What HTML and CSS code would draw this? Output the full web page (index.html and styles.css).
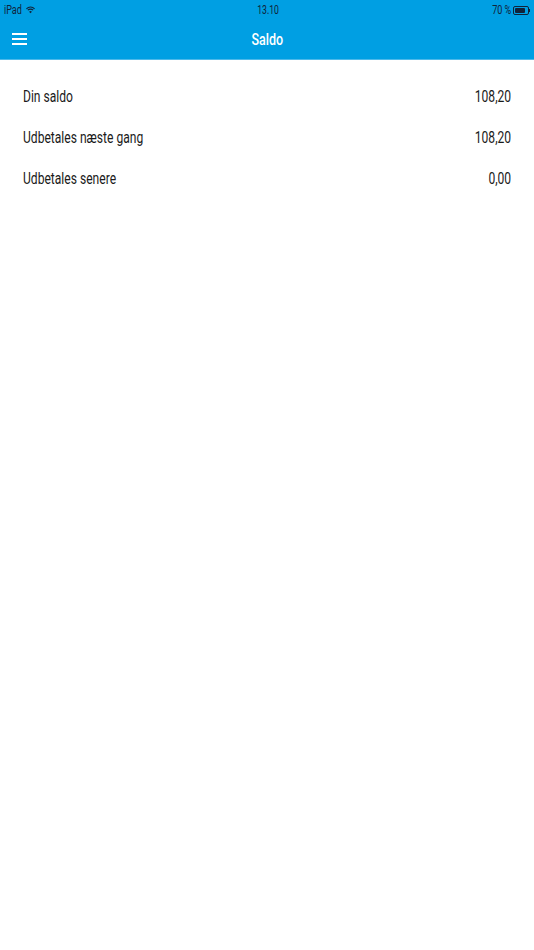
FILE: index.html
```html
<!DOCTYPE html>
<html lang="da">
<head>
    <meta charset="UTF-8">
    <title>Saldo</title>
    <link rel="stylesheet" href="styles.css">
</head>
<body>
    <header class="header">
        <div class="status-bar">
            <div class="status-left">
                <span class="narrow-left">iPad</span>
                <svg class="wifi" width="9" height="8" viewBox="0 0 11 9">
                    <path d="M0.5 3 A7 7 0 0 1 10.5 3" fill="none" stroke="#10233a" stroke-width="1.3"/>
                    <path d="M2.2 4.8 A4.6 4.6 0 0 1 8.8 4.8" fill="none" stroke="#10233a" stroke-width="1.3"/>
                    <path d="M3.8 6.5 A2.4 2.4 0 0 1 7.2 6.5 L5.5 8.6 Z" fill="#10233a"/>
                </svg>
            </div>
            <div class="status-time">13.10</div>
            <div class="status-right">
                <span class="narrow-right">70 %</span>
                <div class="battery"><div class="battery-level"></div></div>
                <div class="battery-tip"></div>
            </div>
        </div>
        <div class="nav-bar">
            <div class="menu-icon">
                <span></span>
                <span></span>
                <span></span>
            </div>
            <div class="nav-title">Saldo</div>
        </div>
    </header>

    <main class="balance-list">
        <div class="balance-row">
            <span class="narrow-left">Din saldo</span>
            <span class="narrow-right">108,20</span>
        </div>
        <div class="balance-row">
            <span class="narrow-left">Udbetales næste gang</span>
            <span class="narrow-right">108,20</span>
        </div>
        <div class="balance-row">
            <span class="narrow-left">Udbetales senere</span>
            <span class="narrow-right">0,00</span>
        </div>
    </main>
</body>
</html>
```

FILE: styles.css
```css
body {
    margin: 0;
    background-color: #fff;
    font-family: Roboto, "Liberation Sans", sans-serif;
}
/* the screenshot is squeezed sideways, so the text is too */
.narrow-left {
    display: inline-block;
    transform: scaleX(0.755);
    transform-origin: left center;
    white-space: nowrap;
}
.narrow-right {
    display: inline-block;
    transform: scaleX(0.755);
    transform-origin: right center;
    white-space: nowrap;
}
.header {
    height: 59px;
    background: #009fe3;
    border-bottom: 1px solid #4db9ea;
}
.status-bar {
    display: grid;
    grid-template-columns: 1fr auto 1fr;
    align-items: center;
    height: 20px;
    padding: 0 4px;
    font-size: 12px;
    color: #10233a;
}
.status-left {
    display: flex;
    align-items: center;
    gap: 4px;
}
.status-left .narrow-left {
    margin-right: -6px;
}
.status-time {
    transform: translateX(1px) scaleX(0.72);
}
.status-right {
    display: flex;
    align-items: center;
    justify-content: flex-end;
    gap: 2px;
}
.battery {
    box-sizing: border-box;
    width: 16px;
    height: 9px;
    padding: 1px;
    border: 1px solid #10233a;
    border-radius: 2px;
}
.battery-level {
    width: 10px;
    height: 5px;
    background: #10233a;
    border-radius: 1px;
}
.battery-tip {
    width: 1px;
    height: 3px;
    margin-left: -2px;
    background: #10233a;
}
.nav-bar {
    position: relative;
    display: flex;
    align-items: center;
    justify-content: center;
    height: 39px;
}
.menu-icon {
    position: absolute;
    left: 12px;
    top: 13px;
    display: flex;
    flex-direction: column;
    gap: 3px;
    width: 15px;
}
.menu-icon span {
    height: 2px;
    background: #fff;
}
.nav-title {
    font-size: 16px;
    font-weight: 500;
    color: #fff;
    transform: scaleX(0.78);
}
.balance-list {
    padding: 16px 23px 0;
}
.balance-row {
    display: flex;
    justify-content: space-between;
    height: 41px;
    line-height: 41px;
    font-size: 16px;
    color: #1a1a1a;
}
```
